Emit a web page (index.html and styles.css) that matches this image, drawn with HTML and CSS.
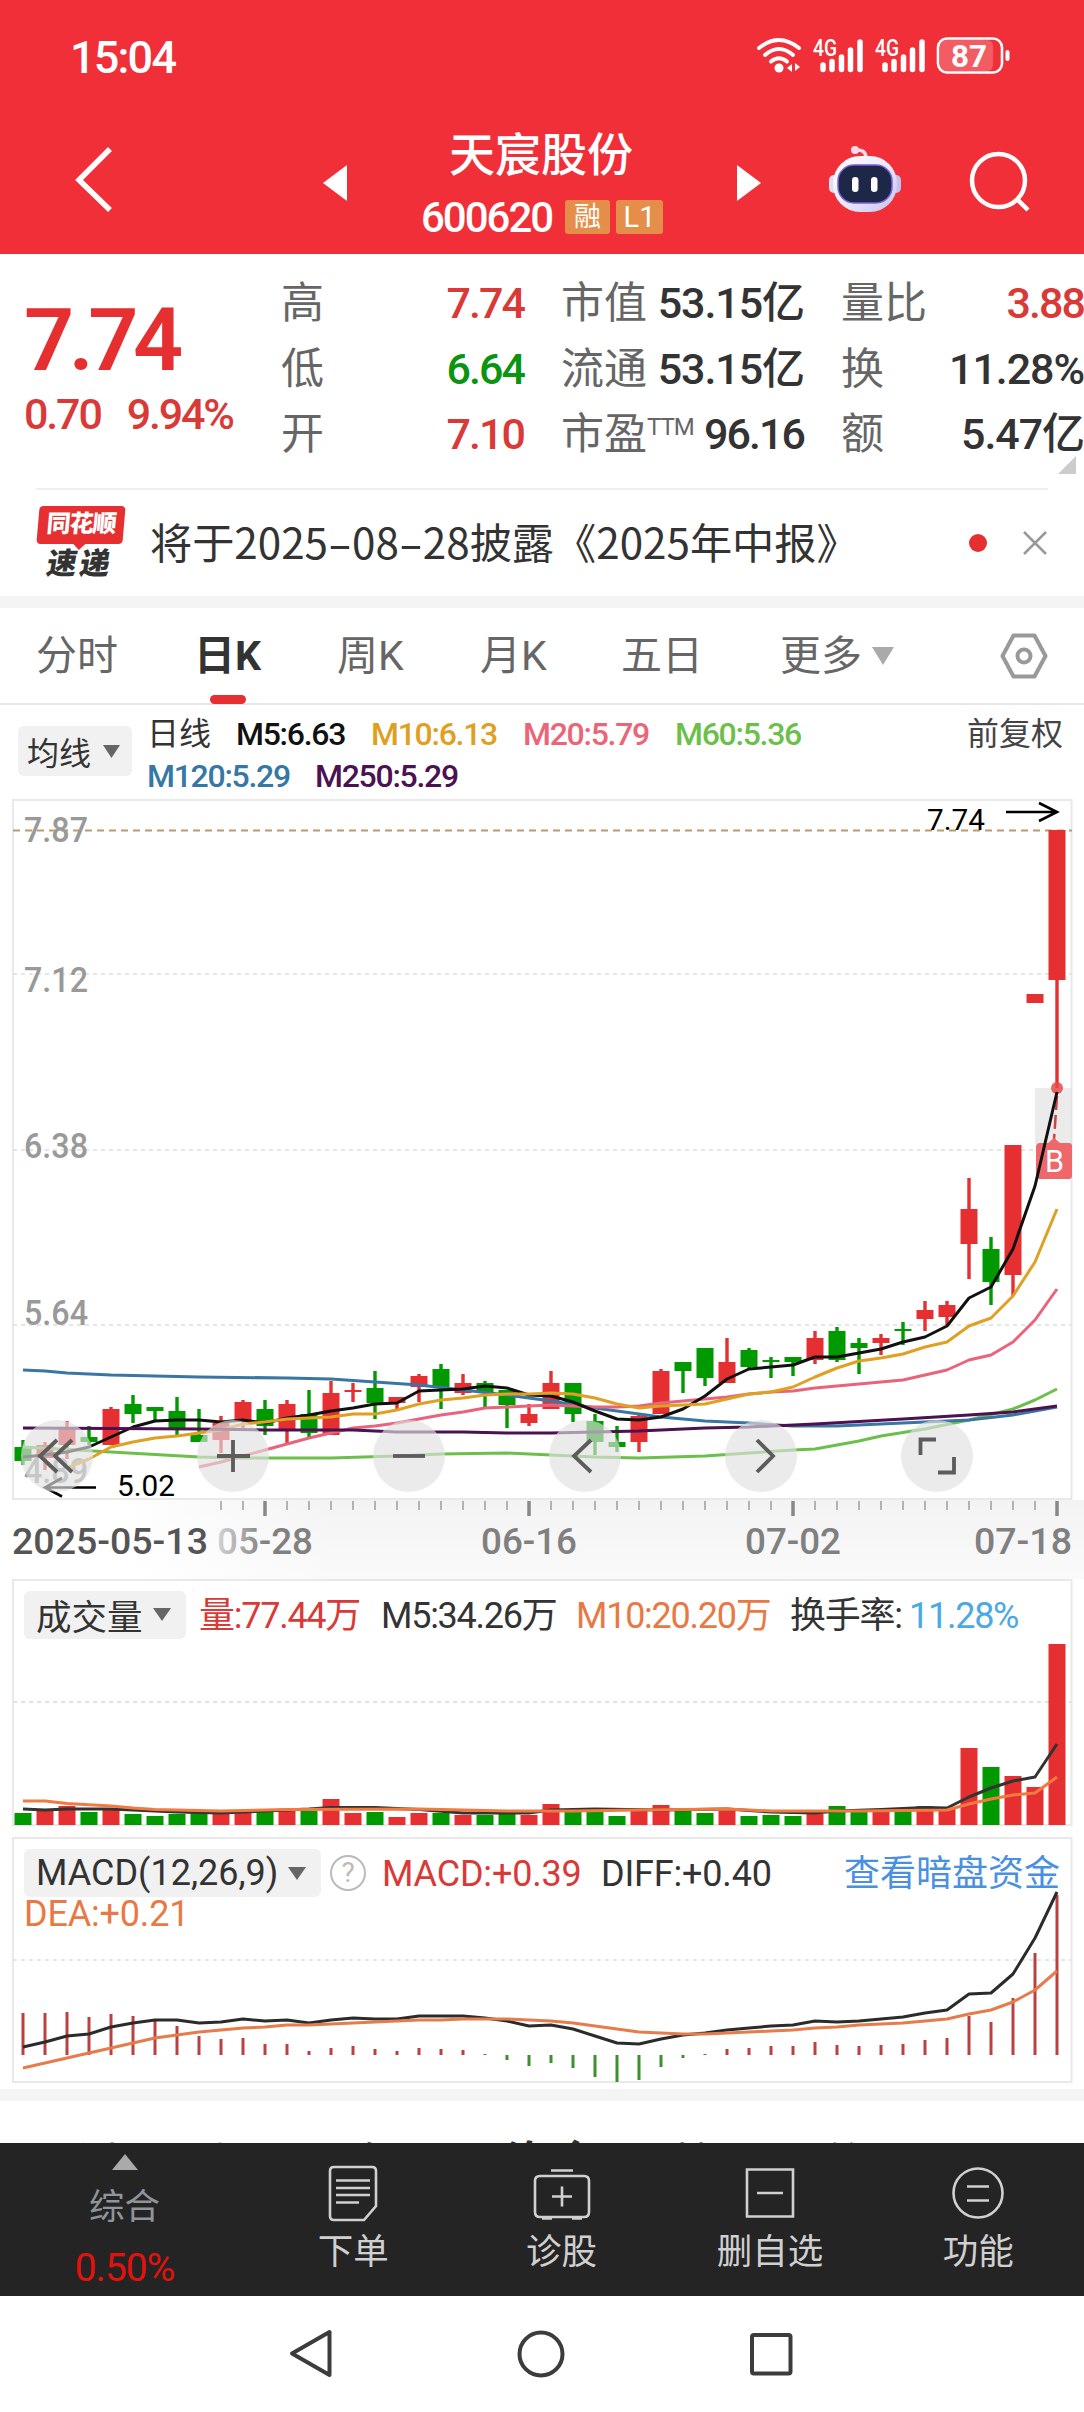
FILE: index.html
```html
<!DOCTYPE html>
<html lang="zh-CN">
<head>
  <meta charset="UTF-8" />
  <title>天宸股份 600620</title>
  <link rel="stylesheet" href="styles.css">
</head>
<body>

  <header class="header">
    <div class="status">
      <span class="time">15:04</span>
      <svg class="status-icons" width="260" height="44" viewBox="754 34 260 44">
        <g fill="none" stroke="#fff" stroke-width="4" stroke-linecap="round">
          <path d="M759 48Q779 32 799 48" />
          <path d="M765 55Q779 43 793 55" />
          <path d="M771 61.500Q779 55 787 61.500" />
        </g>
        <circle cx="779" cy="68" r="4.500" fill="#fff" />
        <path d="M787 68l5-4v8zM800 67l-5-4v8z" fill="#fff" />
        <text class="net" x="813" y="56" textLength="24" lengthAdjust="spacingAndGlyphs">4G</text>
        <text class="net" x="875" y="56" textLength="24" lengthAdjust="spacingAndGlyphs">4G</text>
        <g stroke="#fff" stroke-width="5.500" stroke-linecap="round">
          <path d="M823 65V69.500M832 61.500V69.500M841.500 57V69.500M850.500 50V69.500M860 42V69.500" />
          <path d="M885 65V69.500M894 61.500V69.500M903.500 57V69.500M912.500 50V69.500M922 42V69.500" />
        </g>
        <rect x="940" y="40" width="53" height="31" rx="6" fill="#fff" fill-opacity=".22" />
        <rect x="938" y="38.500" width="64" height="34" rx="9" fill="none" stroke="#fff" stroke-width="2.600" />
        <rect x="1005.500" y="50" width="4" height="11" rx="2" fill="#fff" />
        <text class="battery" x="951" y="67" textLength="36" lengthAdjust="spacingAndGlyphs">87</text>
      </svg>
    </div>
    <div class="title-bar">
      <svg class="back" width="44" height="70" viewBox="72 145 44 70"><path d="M110 149L79 180L110 210" fill="none" stroke="#fff" stroke-width="5.500" /></svg>
      <svg class="prev" width="24" height="36" viewBox="0 0 24 36"><path d="M24 0V36L0 18Z" fill="#fff" /></svg>
      <div class="stock">
        <h1>天宸股份</h1>
        <div class="code"><span class="num">600620</span><i>融</i><i class="level">L1</i></div>
      </div>
      <svg class="next" width="24" height="36" viewBox="0 0 24 36"><path d="M0 0V36L24 18Z" fill="#fff" /></svg>
      <svg class="robot" width="76" height="70" viewBox="827 145 76 70">
        <defs>
          <linearGradient id="shell" x1="0" y1="0" x2="1" y2="1"><stop offset="0" stop-color="#fff" /><stop offset=".5" stop-color="#ecebfa" /><stop offset="1" stop-color="#c4c0f0" /></linearGradient>
        </defs>
        <path d="M855 150Q866 149 866 158" fill="none" stroke="#f3dcee" stroke-width="3.500" />
        <circle cx="855" cy="150" r="4" fill="#f3dcee" />
        <rect x="829" y="175" width="12" height="18" rx="5" fill="#dcdcf3" />
        <rect x="889" y="175" width="12" height="18" rx="5" fill="#c5c0ee" />
        <rect x="833" y="156" width="64" height="56" rx="27" fill="url(#shell)" />
        <rect x="838" y="165" width="54" height="38" rx="16" fill="#1d2848" stroke="#7d5fd8" stroke-width="1.500" />
        <rect x="852" y="177" width="6.500" height="15" rx="3.200" fill="#fff" />
        <rect x="871" y="177" width="6.500" height="15" rx="3.200" fill="#fff" />
      </svg>
      <svg class="search" width="64" height="64" viewBox="968 150 64 64"><g fill="none" stroke="#fff" stroke-width="4.500"><circle cx="998.500" cy="180.500" r="26.500" /><path d="M1017 199L1028 210" /></g></svg>
    </div>
  </header>

  <section class="quote">
    <div class="price">
      <div class="last">7.74</div>
      <div class="change num"><span>0.70</span><span>9.94%</span></div>
    </div>
    <div class="stats">
      <span>高</span><b class="up">7.74</b><span>市值</span><b class="wide">53.15亿</b><span>量比</span><b class="up">3.88</b>
      <span>低</span><b class="down">6.64</b><span>流通</span><b class="wide">53.15亿</b><span>换</span><b class="wide">11.28%</b>
      <span>开</span><b class="up">7.10</b><span>市盈<sup>TTM</sup></span><b>96.16</b><span>额</span><b class="wide">5.47亿</b>
    </div>
    <svg class="more-corner" width="18" height="18" viewBox="0 0 18 18"><path d="M18 0V18H0Z" fill="#ccc" /></svg>
  </section>

  <section class="news">
    <div class="news-logo">
      <span class="bubble">同花顺</span>
      <span class="express">速递</span>
    </div>
    <p>将于2025<i>-</i>08<i>-</i>28披露《2025年中报》</p>
    <span class="dot"></span>
    <svg class="close" width="24" height="24" viewBox="0 0 24 24"><path d="M1 1L23 23M23 1L1 23" stroke="#999" stroke-width="2.500" /></svg>
  </section>

  <nav class="tabs">
    <a>分时</a>
    <a class="active">日K</a>
    <a>周K</a>
    <a>月K</a>
    <a>五日</a>
    <a>更多<svg width="22" height="18" viewBox="0 0 22 18"><path d="M0 0H22L11 18Z" fill="#aaa" /></svg></a>
    <svg class="settings" width="48" height="46" viewBox="0 0 48 46"><g fill="none" stroke="#999" stroke-width="4"><path d="M13.500 2.500H34.500L45.500 23L34.500 43.500H13.500L2.500 23Z" stroke-linejoin="round" /><circle cx="24" cy="23" r="6.500" /></g></svg>
  </nav>

  <section class="ma">
    <button class="pill">均线<svg width="17" height="13" viewBox="0 0 17 13"><path d="M0 0H17L8.500 13Z" fill="#666" /></svg></button>
    <div class="ma-list">
      <span class="kind">日线</span><span class="m5">M5:6.63</span><span class="m10">M10:6.13</span><span class="m20">M20:5.79</span><span class="m60">M60:5.36</span>
    </div>
    <div class="ma-list second">
      <span class="m120">M120:5.29</span><span class="m250">M250:5.29</span>
    </div>
    <span class="adjust">前复权</span>
  </section>

  <svg class="kline" id="kline" width="1084" height="702" viewBox="0 798 1084 702"></svg>
  <svg class="axis" id="axis" width="1084" height="79" viewBox="0 1500 1084 79"></svg>

  <section class="panel volume">
    <svg id="volume" width="1084" height="247" viewBox="0 1579 1084 247"></svg>
    <div class="panel-head">
      <button class="pill">成交量<svg width="18" height="13" viewBox="0 0 18 13"><path d="M0 0H18L9 13Z" fill="#666" /></svg></button>
      <span class="up">量:77.44万</span>
      <span>M5:34.26万</span>
      <span class="orange">M10:20.20万</span>
      <span>换手率:</span>
      <span class="blue">11.28%</span>
    </div>
  </section>

  <section class="panel macd">
    <svg id="macd" width="1084" height="252" viewBox="0 1837 1084 252"></svg>
    <div class="panel-head">
      <button class="pill">MACD(12,26,9)<svg width="18" height="13" viewBox="0 0 18 13"><path d="M0 0H18L9 13Z" fill="#666" /></svg></button>
      <span class="help">?</span>
      <span class="up">MACD:+0.39</span>
      <span>DIFF:+0.40</span>
      <a class="link">查看暗盘资金</a>
      <span class="orange dea">DEA:+0.21</span>
    </div>
  </section>

  <nav class="subtabs">
    <a>看点</a><a>资讯</a><a>盘口</a><a class="active">资金</a><a>基面</a><a>简况(F10)</a>
  </nav>

  <nav class="toolbar">
    <a class="index">
      <svg width="26" height="16" viewBox="0 0 26 16"><path d="M13 0L26 16H0Z" fill="#aaa" /></svg>
      <span>综合</span>
      <em>0.50%</em>
    </a>
    <a>
      <svg width="60" height="60" viewBox="-30 -30 60 60"><path d="M-19-26H19Q23-26 23-22V13L11 27H-19Q-23 27-23 23V-22Q-23-26-19-26ZM-17-12.500H17M-17-5H17M-17 2H17M-17 9.500H6" /></svg>
      下单
    </a>
    <a>
      <svg width="60" height="60" viewBox="-30 -30 60 60"><path d="M-11-22.500H11M-22-17H22Q27-17 27-12V19Q27 24 22 24H-22Q-27 24-27 19V-12Q-27-17-22-17ZM-10 3.500H10M0-6.500V13.500M-20 25.500H-10M10 25.500H20" /></svg>
      诊股
    </a>
    <a>
      <svg width="60" height="60" viewBox="-30 -30 60 60"><path d="M-23-23.500H23V23.500H-23ZM-13 0H13" /></svg>
      删自选
    </a>
    <a>
      <svg width="60" height="60" viewBox="-30 -30 60 60"><circle r="24.500" /><path d="M-11-6.500H11M-11 7.500H11" /></svg>
      功能
    </a>
  </nav>

  <footer class="system-nav">
    <svg width="50" height="56" viewBox="286 2326 50 56"><path d="M329.500 2332V2375L292 2353.500Z" stroke-linejoin="round" /></svg>
    <svg width="50" height="56" viewBox="517 2326 50 56"><circle cx="542" cy="2354" r="21.500" /></svg>
    <svg width="50" height="56" viewBox="746 2326 50 56"><rect x="752" y="2335" width="38.500" height="38.500" rx="2" /></svg>
  </footer>

  <script src="script.js"></script>
</body>
</html>
```
FILE: styles.css
```css
* {
  box-sizing: border-box;
}
body {
  margin: 0;
  width: 1084px;
  height: 2412px;
  overflow: hidden;
  background: #fff;
  color: #333;
  font-family: Roboto, "Noto Sans CJK SC", sans-serif;
}

svg {
  display: block;
  flex: none;
}

.num {
  font-weight: 500;
  letter-spacing: -0.05em;
}

.up {
  color: #d93a38;
}

.down {
  color: #0a9410;
}

.orange {
  color: #e87944;
}

.blue {
  color: #4ba9e3;
}

/* header */
.header {
  height: 254px;
  background: #f12f38;
  color: #fff;
}

.status {
  height: 116px;
  padding: 34px 70px 0 70px;
  display: flex;
  justify-content: space-between;
}

.time {
  padding-top: 1px;
  font-size: 45px;
  font-weight: 500;
  line-height: 46px;
  letter-spacing: -1.8px;
}

.net {
  font: 500 23px Roboto, sans-serif;
  fill: #fff;
}

.battery {
  font: 700 32px Roboto, sans-serif;
  fill: #fff;
}

.title-bar {
  height: 138px;
  display: grid;
  grid-template-columns: 72px 251px 76px 338px 90px 141px 116px;
}

.back {
  grid-column: 2;
  margin-top: 29px;
}

.prev {
  grid-column: 3;
  margin-top: 49px;
}

.stock {
  grid-column: 4;
  width: 286px;
  text-align: center;
}

.stock h1 {
  margin: 9px 0 0;
  font-size: 46px;
  font-weight: 500;
  line-height: 60px;
  text-indent: -2px;
}

.code {
  display: flex;
  padding-left: 22px;
  margin-top: 15px;
  font-size: 42px;
  line-height: 36px;
}

.code .num {
  width: 144px;
  text-align: left;
  letter-spacing: -2px;
}

.code i {
  width: 45px;
  height: 34px;
  border-radius: 3px;
  background: #e58e4a;
  font-size: 27px;
  font-style: normal;
  line-height: 34px;
}

.code .level {
  width: 47px;
  margin-left: 6px;
  font-size: 29px;
}

.next {
  grid-column: 5;
  margin-top: 49px;
}

.robot {
  grid-column: 6;
  margin-top: 29px;
}

.search {
  grid-column: 7;
  margin-top: 34px;
}

/* quote */
.quote {
  position: relative;
  height: 234px;
  display: flex;
}

.price {
  width: 281px;
  padding-left: 24px;
  color: #e62f31;
}

.last {
  margin-top: 34px;
  font-size: 88px;
  font-weight: 600;
  line-height: 104px;
  letter-spacing: -5.5px;
}

.change {
  margin-top: -3px;
  font-size: 43px;
  line-height: 50px;
  color: #d93a38;
}

.change span {
  margin-right: 26px;
}

.stats {
  padding-top: 17px;
  display: grid;
  grid-template-columns: 42px 201px 37px 87px 156px 37px 87px 156px;
  grid-template-rows: repeat(3, 65.5px);
  font-size: 43px;
  line-height: 65px;
  white-space: nowrap;
}

.stats span {
  color: #666;
}

.stats span:nth-child(6n+3) {
  grid-column: 4;
}

.stats span:nth-child(6n+5) {
  grid-column: 7;
}

.stats b {
  font-weight: 500;
  text-align: right;
  letter-spacing: -0.045em;
}

.stats .wide {
  letter-spacing: -0.025em;
}

.stats sup {
  font-size: 24px;
  line-height: 20px;
  letter-spacing: -1px;
  vertical-align: 14px;
}

.more-corner {
  position: absolute;
  left: 1058px;
  top: 202px;
}

/* news */
.news {
  height: 108px;
  margin: 0 36px;
  border-top: 2px solid #eee;
  display: flex;
  align-items: center;
}

.news-logo {
  width: 114px;
  height: 75px;
  padding-left: 2px;
}

.bubble {
  display: block;
  position: relative;
  width: 86px;
  height: 38px;
  border-radius: 4px;
  background: #e62f31;
  color: #fff;
  font-size: 24px;
  font-weight: 900;
  line-height: 36px;
  text-align: center;
  letter-spacing: -1px;
  transform: skewX(-5deg);
}

.bubble::after {
  content: "";
  position: absolute;
  left: 37px;
  bottom: -6px;
  border: 6px solid transparent;
  border-top-color: #e62f31;
  border-bottom: 0;
}

.express {
  display: block;
  width: 84px;
  margin-top: 2px;
  font-size: 30px;
  font-weight: 900;
  line-height: 36px;
  text-align: center;
  letter-spacing: 3px;
  transform: skewX(-10deg);
}

.news p {
  width: 819px;
  margin: 0;
  padding-bottom: 6px;
  font-family: "Noto Sans CJK SC", sans-serif;
  font-size: 42.2px;
  white-space: nowrap;
}

.news i {
  display: inline-block;
  width: 24px;
  font-style: normal;
  text-align: center;
  transform: scaleX(1.7);
}

.dot {
  width: 18px;
  height: 18px;
  border-radius: 50%;
  background: #e62f31;
}

.close {
  margin-left: 36px;
}

/* period tabs */
.tabs {
  height: 109px;
  border-top: 12px solid #f4f4f4;
  border-bottom: 2px solid #e8e8e8;
  padding-left: 36px;
  display: grid;
  grid-template-columns: 158px 143px 143px 141px 159px 220px 50px;
  align-items: center;
  color: #666;
  font-size: 41px;
  line-height: 98px;
}

.tabs a {
  display: flex;
  align-items: center;
  height: 95px;
}

.tabs a svg {
  margin-left: 10px;
}

.tabs .active {
  position: relative;
  color: #333;
  font-weight: 700;
}

.tabs .active::after {
  content: "";
  position: absolute;
  left: 16px;
  bottom: -1px;
  width: 36px;
  height: 9px;
  border-radius: 5px;
  background: #e62f31;
}

/* moving averages */
.ma {
  height: 93px;
  padding: 8px 0 0 18px;
  display: grid;
  grid-template-columns: 129px 820px 100px;
  grid-template-rows: 42px 42px;
  font-size: 32px;
  line-height: 42px;
}

.pill {
  display: flex;
  align-items: center;
  border: 0;
  border-radius: 6px;
  background: #f1f1f1;
  color: #333;
  font-family: inherit;
  font-size: 36px;
  padding: 0;
  white-space: nowrap;
}

.ma .pill {
  grid-row: 1 / 3;
  width: 114px;
  height: 50px;
  margin-top: 13px;
  padding-left: 9px;
  font-size: 32px;
}

.ma .pill svg {
  margin-left: 12px;
}

.ma-list {
  display: grid;
  grid-template-columns: 89px 135px 152px 152px 152px;
  font-weight: 500;
  letter-spacing: -0.04em;
}

.ma-list .kind {
  font-weight: 400;
  letter-spacing: 0;
}

.ma-list.second {
  grid-column: 2;
  grid-row: 2;
  grid-template-columns: 168px 167px;
}

.m5 { color: #111; }
.m10 { color: #e0a01f; }
.m20 { color: #ec6478; }
.m60 { color: #6cbf4b; }
.m120 { color: #3577a5; }
.m250 { color: #4c1151; }

.adjust {
  grid-column: 3;
  grid-row: 1;
  color: #444;
}

/* charts */
svg text {
  font-family: Roboto, sans-serif;
}

.scale {
  font-size: 34.5px;
  font-weight: 500;
  fill: #999;
}

.mark {
  font-size: 30px;
  fill: #000;
}

.date {
  font-size: 37px;
  font-weight: 500;
  fill: #808080;
}

.date.first {
  fill: #555;
}

.axis {
  background: linear-gradient(to bottom, rgba(255, 255, 255, 0), rgba(255, 255, 255, .6)), linear-gradient(to right, #fff 120px, #f3f3f3 330px);
}

.panel {
  display: grid;
}

.panel > * {
  grid-area: 1 / 1;
}

.volume {
  height: 258px;
}

.macd {
  height: 252px;
}

.panel-head {
  display: grid;
  align-content: start;
  padding: 12px 0 0 24px;
  font-size: 36px;
  font-weight: 400;
  line-height: 50px;
  white-space: nowrap;
}

.panel-head .pill {
  height: 48px;
  padding-left: 12px;
  letter-spacing: 0;
}

.pill svg {
  margin-left: 10px;
}

.volume .panel-head {
  grid-template-columns: 175px 182px 195px 214px 119px 120px;
  letter-spacing: -0.035em;
}

.volume .pill {
  width: 162px;
  padding-bottom: 2px;
  font-size: 35.5px;
}

.macd .panel-head {
  grid-template-columns: 306px 52px 219px 244px 216px;
  grid-template-rows: 48px 34px;
  letter-spacing: -0.005em;
}

.macd .pill {
  width: 297px;
}

.help {
  width: 36px;
  height: 36px;
  margin-top: 6px;
  border: 2.5px solid #bbb;
  border-radius: 50%;
  color: #bbb;
  font-size: 28px;
  line-height: 31px;
  text-align: center;
}

.link {
  margin-left: -1px;
  color: #4a90e2;
  font-size: 36px;
  letter-spacing: 0;
}

.dea {
  line-height: 34px;
}

/* lower tabs, mostly under the toolbar */
.subtabs {
  height: 54px;
  border-top: 12px solid #f4f4f4;
  padding: 33px 0 0 48px;
  overflow: hidden;
  display: grid;
  grid-template-columns: 150px 150px 158px 164px 155px 220px;
  color: #666;
  font-size: 43px;
  line-height: 60px;
  white-space: nowrap;
}

.subtabs .active {
  color: #333;
  font-size: 46px;
  font-weight: 700;
  line-height: 58px;
}

.toolbar {
  height: 153px;
  background: #242424;
  color: #d0d0d0;
  display: grid;
  grid-template-columns: 249px repeat(4, 208.4px);
  font-size: 35.5px;
  line-height: 50px;
  text-align: center;
}

.toolbar a {
  display: flex;
  flex-direction: column;
  align-items: center;
  padding-top: 20px;
}

.toolbar a:not(.index) svg {
  margin-bottom: 4px;
  fill: none;
  stroke: #d0d0d0;
  stroke-width: 2.6;
}

.toolbar .index {
  padding-top: 11px;
  color: #8e959b;
}

.index span {
  margin-top: 12px;
}

.index em {
  margin-top: 11px;
  color: #e0130f;
  font-size: 39px;
  font-style: normal;
  letter-spacing: -1px;
}

.system-nav {
  height: 116px;
  padding: 30px 288px 0 286px;
  display: flex;
  justify-content: space-between;
  fill: none;
  stroke: #3c3c3c;
  stroke-width: 4;
}
```
FILE: script.js
```js
const RED = '#e62f31';
const GREEN = '#009900';
const COUNT = 48;

// centre of the n-th trading day
const x = i => 23 + 22 * i;

// [up, high, body top, body bottom, low]
const candles = [
  [0, 1440, 1447, 1461, 1465], [1, 1442, 1445, 1458, 1470], [1, 1421, 1429, 1445, 1459], [0, 1426, 1437, 1442, 1445],
  [1, 1407, 1409, 1445, 1445], [0, 1395, 1404, 1414, 1423], [0, 1407, 1407, 1411, 1421], [0, 1397, 1411, 1428, 1435],
  [0, 1409, 1435, 1442, 1442], [1, 1416, 1423, 1440, 1453], [1, 1400, 1402, 1422, 1428], [0, 1400, 1409, 1426, 1435],
  [1, 1400, 1404, 1429, 1443], [0, 1390, 1414, 1433, 1439], [1, 1381, 1393, 1435, 1435], [1, 1383, 1390, 1392, 1402],
  [0, 1371, 1388, 1403, 1419], [1, 1397, 1397, 1403, 1409], [1, 1374, 1376, 1387, 1402], [0, 1364, 1369, 1387, 1409],
  [1, 1374, 1383, 1393, 1395], [0, 1381, 1383, 1393, 1407], [0, 1390, 1390, 1405, 1428], [1, 1404, 1414, 1423, 1426],
  [1, 1371, 1383, 1409, 1409], [0, 1383, 1383, 1414, 1422], [0, 1414, 1421, 1442, 1455], [0, 1426, 1442, 1447, 1452],
  [1, 1414, 1416, 1442, 1452], [1, 1369, 1371, 1414, 1414], [0, 1362, 1362, 1371, 1393], [0, 1348, 1348, 1378, 1386],
  [1, 1338, 1362, 1383, 1383], [0, 1348, 1350, 1367, 1369], [0, 1357, 1360, 1362, 1378], [0, 1357, 1357, 1362, 1376],
  [1, 1331, 1338, 1360, 1364], [0, 1327, 1331, 1360, 1362], [0, 1338, 1343, 1348, 1374], [1, 1334, 1338, 1343, 1355],
  [0, 1322, 1329, 1331, 1345], [1, 1301, 1310, 1319, 1331], [1, 1301, 1305, 1317, 1325], [1, 1178, 1209, 1244, 1279],
  [0, 1237, 1249, 1282, 1305], [1, 1145, 1145, 1275, 1296], [1, 994, 994, 1003, 1003], [1, 830, 830, 980, 1088]
];

const m5 = [1457, 1455, 1452, 1447, 1437, 1427, 1421, 1420, 1420, 1422, 1420, 1423, 1418, 1415, 1411, 1408, 1404, 1403, 1391, 1390, 1389, 1386, 1388, 1395, 1396, 1402, 1411, 1419, 1420, 1417, 1409, 1396, 1379, 1369, 1367, 1365, 1357, 1357, 1353, 1349, 1342, 1337, 1326, 1298, 1287, 1249, 1186, 1092];
const m10 = [1468, 1459, 1447, 1442, 1438, 1436, 1433, 1430, 1424, 1422, 1419, 1418, 1417, 1414, 1414, 1410, 1404, 1400, 1398, 1395, 1394, 1394, 1393, 1394, 1398, 1404, 1408, 1406, 1405, 1404, 1399, 1394, 1392, 1387, 1377, 1368, 1361, 1358, 1354, 1347, 1342, 1326, 1318, 1296, 1262, 1209];
const m20 = [1467, 1462, 1456, 1450, 1444, 1438, 1433, 1428, 1426, 1423, 1419, 1415, 1412, 1408, 1407, 1406, 1405, 1406, 1407, 1407, 1406, 1403, 1401, 1399, 1397, 1394, 1392, 1391, 1388, 1386, 1384, 1382, 1380, 1375, 1370, 1360, 1355, 1342, 1320, 1289];

// slow lines only need their turning points: [day, y]
const m60 = [[0, 1447], [4, 1452], [8, 1457], [10, 1458], [14, 1458], [17, 1456], [19, 1454], [22, 1453], [24, 1455], [26, 1457], [28, 1458], [31, 1456], [33, 1453], [35, 1450], [36, 1449], [38, 1441], [39, 1436], [41, 1429], [43, 1420], [45, 1409], [46, 1400], [47, 1389]];
const m120 = [[0, 1370], [1, 1371], [2, 1373], [4, 1375], [8, 1377], [12, 1378], [14, 1379], [16, 1382], [18, 1385], [20, 1390], [22, 1395], [24, 1401], [26, 1408], [28, 1414], [29, 1417], [31, 1421], [33, 1423], [35, 1426], [37, 1426], [40, 1423], [43, 1420], [45, 1415], [46, 1411], [47, 1407]];
const m250 = [[0, 1428], [8, 1429], [11, 1430], [15, 1430], [17, 1432], [20, 1432], [22, 1433], [24, 1433], [28, 1431], [31, 1428], [33, 1427], [36, 1424], [40, 1419], [43, 1415], [45, 1412], [47, 1406]];

const volumes = [1813, 1810, 1806, 1812, 1809, 1814, 1816, 1814, 1812, 1813, 1811, 1811, 1811, 1811, 1799, 1813, 1812, 1817, 1813, 1813, 1815, 1815, 1814, 1815, 1804, 1812, 1812, 1816, 1811, 1805, 1811, 1813, 1811, 1816, 1815, 1816, 1814, 1806, 1811, 1811, 1811, 1806, 1809, 1748, 1767, 1776, 1787, 1644];
const vol5 = [[0, 1809], [1, 1810], [2, 1809], [4, 1809], [5, 1810], [7, 1812], [9, 1813], [10, 1812], [12, 1810], [13, 1809], [14, 1807.5], [16, 1807.5], [18, 1809.5], [20, 1813], [23, 1813], [24, 1810], [26, 1809], [29, 1810], [32, 1809], [34, 1812], [36, 1813], [37, 1811], [39, 1809.5], [41, 1807.5], [42, 1808], [43, 1797], [44, 1788], [45, 1781], [46, 1777], [47, 1744]];
const vol10 = [[0, 1801], [1, 1801], [2, 1803.5], [4, 1806], [5, 1808], [6, 1809.5], [9, 1811], [12, 1809.5], [18, 1809], [22, 1811], [25, 1811], [28, 1810], [32, 1809], [34, 1811], [38, 1811], [42, 1810], [43, 1804], [44, 1799], [45, 1795], [46, 1793], [47, 1777]];

const macdZero = 2055;
const macdBars = [2013, 2013, 2012, 2017, 2014, 2016, 2021, 2026, 2036, 2039, 2038, 2044, 2044, 2051, 2048, 2046, 2049, 2051, 2048, 2049, 2050, 2054, 2060, 2066, 2063, 2068, 2077, 2082, 2080, 2067, 2058, 2054, 2049, 2048, 2046, 2046, 2042, 2045, 2046, 2045, 2044, 2040, 2038, 2016, 2022, 1998, 1953, 1895];
const diff = [2047, 2042, 2036, 2034, 2027, 2023, 2020, 2020, 2023, 2022, 2019, 2021, 2020, 2023, 2020, 2018, 2019, 2019, 2016, 2016, 2016, 2018, 2021, 2026, 2025, 2029, 2036, 2043, 2044, 2039, 2035, 2033, 2030, 2028, 2026, 2025, 2021, 2022, 2021, 2019, 2017, 2013, 2010, 1994, 1993, 1974, 1938, 1892];
const dea = [2068, 2063, 2058, 2053, 2048, 2043, 2038, 2035, 2032, 2030, 2028, 2027, 2025, 2025, 2024, 2023, 2022, 2021, 2020, 2020, 2019, 2019, 2019, 2020, 2021, 2023, 2026, 2029, 2032, 2033, 2034, 2034, 2033, 2032, 2031, 2030, 2028, 2027, 2025, 2024, 2023, 2021, 2019, 2014, 2010, 2002, 1990, 1971];

function line(points, color) {
  const d = points.map(([i, y]) => `${x(i)},${y}`).join(' ');
  return `<polyline points="${d}" fill="none" stroke="${color}" stroke-width="3" stroke-linejoin="round" />`;
}

// daily values, aligned to the last day
function daily(values, color) {
  const start = COUNT - values.length;
  return line(values.map((y, i) => [start + i, y]), color);
}

function grid(y, color = '#ddd', dash = '4 4', width = 1.5) {
  return `<path d="M13 ${y}H1072" stroke="${color}" stroke-width="${width}" stroke-dasharray="${dash}" />`;
}

function frame(top, bottom) {
  return `<rect x="13" y="${top}" width="1058.5" height="${bottom - top}" fill="none" stroke="#e9e9e9" stroke-width="2" />`;
}

function label(cls, px, py, width, text, extra = '') {
  return `<text class="${cls}" x="${px}" y="${py}" textLength="${width}" lengthAdjust="spacingAndGlyphs" ${extra}>${text}</text>`;
}

function drawKline() {
  let out = frame(800, 1499);
  out += grid(974) + grid(1150) + grid(1325);
  out += grid(830.5, '#bd9a6b', '7 5', 1.8);
  [['7.87', 842], ['7.12', 992], ['6.38', 1158], ['5.64', 1325], ['4.89', 1483]].forEach(([t, y]) => {
    out += label('scale', 24, y, 64, t);
  });

  candles.forEach(([up, high, top, bottom, low], i) => {
    const c = up ? RED : GREEN;
    out += `<path d="M${x(i)} ${high}V${low}" stroke="${c}" stroke-width="3.4" />`;
    out += `<rect x="${x(i) - 8.5}" y="${top}" width="17" height="${bottom - top}" fill="${c}" />`;
  });

  // buy marker
  out += '<rect x="1035" y="1088" width="37" height="56" fill="#ddd" fill-opacity=".6" />';
  out += '<path d="M1057 1096L1054 1140" stroke="#c44" stroke-width="2.500" stroke-dasharray="14 5" />';
  out += '<path d="M1040 1143H1048L1054 1138L1060 1143H1069Q1072 1143 1072 1146V1176Q1072 1179 1069 1179H1040Q1036 1179 1036 1175V1147Q1036 1143 1040 1143Z" fill="#ee686b" />';
  out += label('b', 1045, 1172, 19, 'B', 'font-size="31" fill="#fff"');
  out += '<circle cx="1057" cy="1088" r="6" fill="#e64a4a" fill-opacity=".85" />';

  out += line(m60, '#6cbf4b') + line(m120, '#3a76a3') + daily(m20, '#e8647a');
  out += daily(m5, '#111') + daily(m10, '#dfa024') + line(m250, '#4c1151');

  out += label('mark', 927, 830, 58, '7.74');
  out += '<path d="M1006 812H1056M1039 803L1057 812L1039 821" fill="none" stroke="#000" stroke-width="2.600" />';
  out += label('mark', 117, 1496, 58, '5.02');
  out += '<path d="M96 1487.500H45M62 1478L45 1487.500L62 1496.500" fill="none" stroke="#000" stroke-width="2.600" />';

  const icons = [
    'M57 1440L40 1456L57 1472M72 1440L55 1456L72 1472',
    'M217 1456H250M233 1440V1472',
    'M393 1456H425',
    'M591 1440L574 1456L591 1472',
    'M757 1440L773 1456L757 1472',
    'M936 1439.500H920.500V1455M938 1472.500H954V1457'
  ];
  icons.forEach((d, i) => {
    out += `<circle cx="${57 + 176 * i}" cy="1456" r="36" fill="#e0e0e0" fill-opacity=".65" />`;
    out += `<path d="${d}" fill="none" stroke="#5c5c5c" stroke-width="3.800" />`;
  });
  document.getElementById('kline').innerHTML = out;
}

function drawAxis() {
  let out = '';
  for (let i = 9; i < COUNT; i++) {
    const major = (i + 1) % 12 === 0;
    out += `<path d="M${x(i)} 1501V${major ? 1516 : 1510}" stroke="#888" stroke-width="${major ? 3.5 : 1.2}" />`;
  }
  out += '<defs><linearGradient id="fade"><stop offset="0" stop-color="#d4d4d4" /><stop offset=".5" stop-color="#808080" /></linearGradient></defs>';
  out += label('date first', 12, 1554, 196, '2025-05-13');
  out += label('date', 217, 1554, 96, '05-28', 'style="fill:url(#fade)"');
  out += label('date', 481, 1554, 96, '06-16');
  out += label('date', 745, 1554, 96, '07-02');
  out += label('date', 974, 1554, 98, '07-18');
  document.getElementById('axis').innerHTML = out;
}

function drawVolume() {
  let out = frame(1580, 1825) + grid(1702, '#e2e2e2', '4 4', 2);
  volumes.forEach((y, i) => {
    out += `<rect x="${x(i) - 8.5}" y="${y}" width="17" height="${1825 - y}" fill="${candles[i][0] ? RED : GREEN}" />`;
  });
  out += line(vol5, '#333') + line(vol10, '#f27a41');
  document.getElementById('volume').innerHTML = out;
}

function drawMacd() {
  let out = frame(1838, 2082) + grid(1960, '#e6e6e6', '4 4', 2);
  macdBars.forEach((y, i) => {
    out += `<path d="M${x(i)} ${macdZero}V${y}" stroke="${y < macdZero ? '#bb4141' : '#3d8f30'}" stroke-width="3" />`;
  });
  out += daily(diff, '#2b2b2b') + daily(dea, '#e67c4c');
  document.getElementById('macd').innerHTML = out;
}

drawKline();
drawAxis();
drawVolume();
drawMacd();
```
